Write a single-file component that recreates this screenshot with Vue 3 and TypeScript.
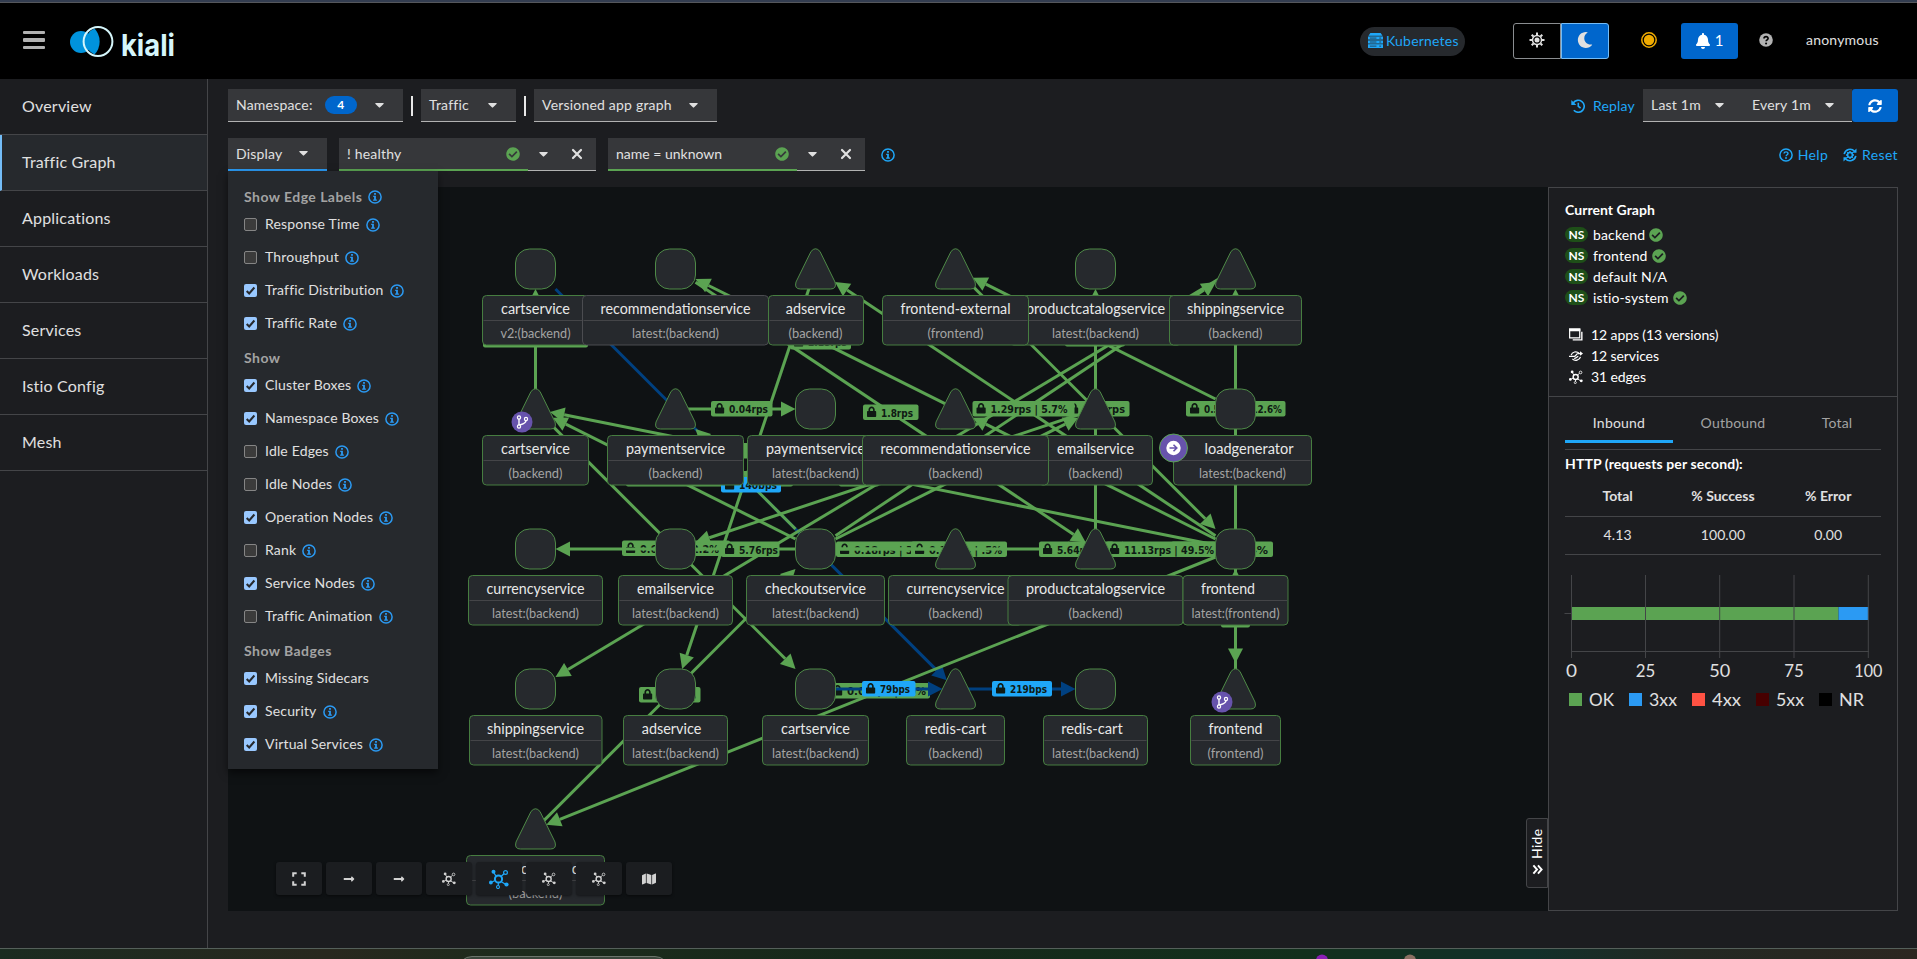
<script setup lang="ts">
import { h, type FunctionalComponent } from 'vue'

type Glyph = { box: string; svg: string }

const glyphs: Record<string, Glyph> = {
  caret: { box: '0 160 320 240', svg: '<path d="M31.3 192h257.3c17.8 0 26.7 21.5 14.1 34.1L174.1 354.8c-7.8 7.8-20.5 7.8-28.3 0L17.2 226.1C4.6 213.5 13.5 192 31.3 192z"/>' },
  check: { box: '0 0 512 512', svg: '<path d="M504 256c0 136.967-111.033 248-248 248S8 392.967 8 256 119.033 8 256 8s248 111.033 248 248zM227.314 387.314l184-184c6.248-6.248 6.248-16.379 0-22.627l-22.627-22.627c-6.248-6.249-16.379-6.249-22.628 0L216 308.118l-70.059-70.059c-6.248-6.248-16.379-6.248-22.628 0l-22.627 22.627c-6.248 6.248-6.248 16.379 0 22.627l104 104c6.249 6.249 16.379 6.249 22.628.001z"/>' },
  close: { box: '0 0 12 12', svg: '<path d="M2 2l8 8M10 2l-8 8" fill="none" stroke="currentColor" stroke-width="2.2" stroke-linecap="round"/>' },
  info: { box: '0 0 14 14', svg: '<circle cx="7" cy="7" r="6.1" fill="none" stroke="currentColor" stroke-width="1.5"/><rect x="6.1" y="3" width="1.8" height="1.8"/><path d="M5.2 5.8h2.7v3.6h1v1.3H5.1V9.4h1V7.1h-.9z"/>' },
  help: { box: '0 0 14 14', svg: '<circle cx="7" cy="7" r="6.1" fill="none" stroke="currentColor" stroke-width="1.5"/><path d="M5 5.5C5.100 3.300 9 3.300 9 5.500C9 6.800 7.200 6.800 7.100 8.200" fill="none" stroke="currentColor" stroke-width="1.4"/><circle cx="7" cy="10" r=".95"/>' },
  helpSolid: { box: '0 0 16 16', svg: '<circle cx="8" cy="8" r="7.800"/><path d="M5.700 6.300C5.800 3.500 10.500 3.500 10.400 6.300C10.300 7.900 8.200 7.800 8.100 9.500" fill="none" stroke="#000" stroke-width="1.900"/><circle cx="8.100" cy="12" r="1.200" fill="#000"/>' },
  moon: { box: '0 0 512 512', svg: '<path d="M283.211 512c78.962 0 151.079-35.925 198.857-94.792 7.068-8.708-.639-21.43-11.562-19.35-124.203 23.654-238.262-71.576-238.262-196.954 0-72.222 38.662-138.635 101.498-174.394 9.686-5.512 7.25-20.197-3.756-22.23A258.156 258.156 0 0 0 283.211 0c-141.309 0-256 114.511-256 256 0 141.309 114.511 256 256 256z"/>' },
  sun: { box: '0 0 16 16', svg: '<g fill="none" stroke="currentColor"><circle cx="8" cy="8" r="4.500" stroke-width="1.500"/><path d="M8 .5v2.500M8 13v2.500M.5 8h2.500M13 8h2.500M2.700 2.700l1.800 1.800M11.500 11.500l1.800 1.800M13.300 2.700l-1.800 1.800M4.500 11.500l-1.800 1.800" stroke-width="2"/></g><circle cx="8" cy="8" r="2.500"/>' },
  status: { box: '0 0 16 16', svg: '<circle cx="8" cy="8" r="7.200" fill="none" stroke="currentColor" stroke-width="1.500"/><circle cx="8" cy="8" r="5.200"/>' },
  bell: { box: '0 0 448 512', svg: '<path d="M224 512c35.32 0 63.97-28.65 63.97-64H160.03c0 35.35 28.65 64 63.97 64zm215.39-149.71c-19.32-20.76-55.47-51.99-55.47-154.29 0-77.7-54.48-139.9-127.94-155.16V32c0-17.67-14.32-32-31.98-32s-31.98 14.33-31.98 32v20.84C118.56 68.1 64.08 130.3 64.08 208c0 102.3-36.15 133.53-55.47 154.29-6 6.45-8.66 14.16-8.61 21.71.11 16.4 12.98 32 32.1 32h383.8c19.12 0 32-15.6 32.1-32 .05-7.55-2.61-15.27-8.61-21.71z"/>' },
  sync: { box: '0 0 512 512', svg: '<path d="M370.72 133.28C339.458 104.008 298.888 87.962 255.848 88c-77.458.068-144.328 53.178-162.791 126.85-1.344 5.363-6.122 9.15-11.651 9.15H24.103c-7.498 0-13.194-6.807-11.807-14.176C33.933 94.924 134.813 8 256 8c66.448 0 126.791 26.136 171.315 68.685L463.03 40.97C478.149 25.851 504 36.559 504 57.941V192c0 13.255-10.745 24-24 24H345.941c-21.382 0-32.09-25.851-16.971-40.971l41.75-41.749zM32 296h134.059c21.382 0 32.09 25.851 16.971 40.971l-41.75 41.75c31.262 29.273 71.835 45.319 114.876 45.28 77.418-.07 144.315-53.144 162.787-126.849 1.344-5.363 6.122-9.15 11.651-9.15h57.304c7.498 0 13.194 6.807 11.807 14.176C478.067 417.076 377.187 504 256 504c-66.448 0-126.791-26.136-171.315-68.685L48.97 471.03C33.851 486.149 8 475.441 8 454.059V320c0-13.255 10.745-24 24-24z"/>' },
  history: { box: '0 0 14 14', svg: '<path d="M2.200 4A6 6 0 1 1 2.800 11.300M7.300 3.800V7.300L9.600 9" fill="none" stroke="currentColor" stroke-width="1.600"/><path d="M.3.900V6h5z"/>' },
  reset: { box: '0 0 14 14', svg: '<g fill="none" stroke="currentColor"><path d="M1.200 6.200A6 6 0 0 1 11.500 3.200M12.800 7.800A6 6 0 0 1 2.500 10.800" stroke-width="1.600"/><circle cx="7" cy="7" r="2.400" stroke-width="1.500"/><path d="M7 3v1.500M7 9.500V11M3 7h1.500M9.500 7H11M4.200 4.200l1 1M8.800 8.800l1 1M9.800 4.200l-1 1M5.200 8.800l-1 1" stroke-width="1.300"/></g><path d="M13.500.5v4.300H9.200zM.5 13.500V9.200h4.300z"/>' },
  server: { box: '0 0 16 16', svg: '<path d="M2.500 0h11l2 3H.5zM0 3.700h16v3.300H0zM0 7.900h16v3.300H0zM0 12.100h16V16H0z"/><path d="M2 5.400h7M2 9.600h7M2 14h7M12 5.400h2M12 9.600h2M12 14h2" stroke="#26292d" stroke-width=".8"/>' },
  arrow: { box: '0 0 448 512', svg: '<path d="M313.941 216H12c-6.627 0-12 5.373-12 12v56c0 6.627 5.373 12 12 12h301.941v46.059c0 21.382 25.851 32.09 40.971 16.971l86.059-86.059c9.373-9.373 9.373-24.569 0-33.941l-86.059-86.059c-15.119-15.119-40.971-4.411-40.971 16.971V216z"/>' },
  expand: { box: '0 0 14 14', svg: '<path d="M1.200 4.700V1.200h3.500M9.300 1.200h3.500v3.500M12.800 9.300v3.500H9.300M4.700 12.800H1.200V9.300" fill="none" stroke="currentColor" stroke-width="2"/>' },
  map: { box: '0 0 576 512', svg: '<path d="M0 117.66v346.32c0 11.32 11.43 19.06 21.94 14.86L160 416V32L20.12 87.95A32.006 32.006 0 0 0 0 117.66zM192 416l192 64V96L192 32v384zM554.06 33.16L416 96v384l139.88-55.95A31.996 31.996 0 0 0 576 394.34V48.02c0-11.32-11.43-19.06-21.94-14.86z"/>' },
  topology: { box: '0 0 20 20', svg: '<g fill="none" stroke="currentColor"><circle cx="9.500" cy="10" r="3.600" stroke-width="2"/><circle cx="16.500" cy="3.500" r="1.900" stroke-width="1.200"/><circle cx="9" cy="18" r="1.500" stroke-width="1.100"/><path d="M12 7.500l3-2.800M7 7.200L5 4M6 11.500l-3 1.500M12 12.500l4 2.500M9.300 13.500v3" stroke-width="1.300"/></g><circle cx="4.500" cy="2.800" r="2"/><circle cx="1.900" cy="13.500" r="1.900"/><circle cx="17.500" cy="15.500" r="2.100"/>' },
  apps: { box: '0 0 15 14', svg: '<path d="M.7.700h10.800v9.300H.7z" fill="none" stroke="currentColor" stroke-width="1.300"/><path d="M0 0h12.200v3H0z"/><path d="M13 3.500h1.500V13H4v-1.500h9z"/>' },
  service: { box: '0 0 15 14', svg: '<g fill="none" stroke="currentColor" stroke-width="1.300"><path d="M2.300 6a5 4.600 0 0 1 8.500-2M12.300 8a5 4.600 0 0 1-8.700 2M0 7.500h5.500c2 0 2-3 4-3H14M5.500 9.500c2.500 0 3-2 4.500-2"/></g><path d="M11.800 2l3.200 2.400-3.200 2.400z"/>' },
  chevrons: { box: '0 0 12 12', svg: '<path d="M1.500 1.500L5.500 6l-4 4.500M6.500 1.500l4 4.500-4 4.500" fill="none" stroke="currentColor" stroke-width="2.100"/>' },
  tick: { box: '0 0 13 13', svg: '<path d="M2.700 7l2.500 2.500 5.200-6" fill="none" stroke="#26292d" stroke-width="2"/>' },
}

const Icon: FunctionalComponent<{ name: string; w: number; hh?: number }> = (p) =>
  h('svg', {
    width: p.w,
    height: p.hh ?? p.w,
    viewBox: glyphs[p.name].box,
    fill: 'currentColor',
    'aria-hidden': 'true',
    innerHTML: glyphs[p.name].svg,
  })
Icon.props = ['name', 'w', 'hh']

const nav = ['Overview', 'Traffic Graph', 'Applications', 'Workloads', 'Services', 'Istio Config', 'Mesh']

type Option = { label: string; on: boolean; info?: boolean }
const menu: { title: string; info?: boolean; items: Option[] }[] = [
  {
    title: 'Show Edge Labels', info: true,
    items: [
      { label: 'Response Time', on: false, info: true },
      { label: 'Throughput', on: false, info: true },
      { label: 'Traffic Distribution', on: true, info: true },
      { label: 'Traffic Rate', on: true, info: true },
    ],
  },
  {
    title: 'Show',
    items: [
      { label: 'Cluster Boxes', on: true, info: true },
      { label: 'Namespace Boxes', on: true, info: true },
      { label: 'Idle Edges', on: false, info: true },
      { label: 'Idle Nodes', on: false, info: true },
      { label: 'Operation Nodes', on: true, info: true },
      { label: 'Rank', on: false, info: true },
      { label: 'Service Nodes', on: true, info: true },
      { label: 'Traffic Animation', on: false, info: true },
    ],
  },
  {
    title: 'Show Badges',
    items: [
      { label: 'Missing Sidecars', on: true },
      { label: 'Security', on: true, info: true },
      { label: 'Virtual Services', on: true, info: true },
    ],
  },
]

/* Graph coordinates are page coordinates; the canvas viewBox starts at 228,187. */
const C = [535.5, 675.5, 815.5, 955.5, 1095.5, 1235.5]
const R = [269, 409, 549, 689, 829]
type Kind = 's' | 't'
type GNode = { c: number; r: number; k: Kind; name: string; tw: number; sub: string; sw: number; x1: number; x2: number; tx?: number; gray?: boolean }
const LB = 'latest:(backend)'
const B = '(backend)'
const nodes: GNode[] = [
  { c: 0, r: 0, k: 's', name: 'cartservice', tw: 69, sub: 'v2:(backend)', sw: 70, x1: 482.5, x2: 588.5 },
  { c: 1, r: 0, k: 's', name: 'recommendationservice', tw: 150, sub: LB, sw: 87, x1: 582.5, x2: 768.5, gray: true },
  { c: 2, r: 0, k: 't', name: 'adservice', tw: 59.5, sub: B, sw: 54, x1: 768.5, x2: 863.5 },
  { c: 4, r: 0, k: 's', name: 'productcatalogservice', tw: 139, sub: LB, sw: 87, x1: 1009.5, x2: 1181.5 },
  { c: 3, r: 0, k: 't', name: 'frontend-external', tw: 110, sub: '(frontend)', sw: 56, x1: 882.5, x2: 1028.5 },
  { c: 5, r: 0, k: 't', name: 'shippingservice', tw: 97, sub: B, sw: 54, x1: 1169.5, x2: 1301.5 },
  { c: 0, r: 1, k: 't', name: 'cartservice', tw: 69, sub: B, sw: 54, x1: 482.5, x2: 588.5 },
  { c: 1, r: 1, k: 't', name: 'paymentservice', tw: 99, sub: B, sw: 54, x1: 607.5, x2: 743.5 },
  { c: 2, r: 1, k: 's', name: 'paymentservice', tw: 99, sub: LB, sw: 87, x1: 747.5, x2: 883.5 },
  { c: 4, r: 1, k: 't', name: 'emailservice', tw: 77, sub: B, sw: 54, x1: 1038.5, x2: 1152.5 },
  { c: 3, r: 1, k: 't', name: 'recommendationservice', tw: 150, sub: B, sw: 54, x1: 862.5, x2: 1048.5 },
  { c: 5, r: 1, k: 's', name: 'loadgenerator', tw: 89, sub: LB, sw: 87, x1: 1173.5, x2: 1311.5, tx: 1249 },
  { c: 0, r: 2, k: 's', name: 'currencyservice', tw: 98, sub: LB, sw: 87, x1: 468.5, x2: 602.5 },
  { c: 1, r: 2, k: 's', name: 'emailservice', tw: 77, sub: LB, sw: 87, x1: 618.5, x2: 732.5 },
  { c: 2, r: 2, k: 's', name: 'checkoutservice', tw: 101, sub: LB, sw: 87, x1: 746.5, x2: 884.5 },
  { c: 3, r: 2, k: 't', name: 'currencyservice', tw: 98, sub: B, sw: 54, x1: 888.5, x2: 1022.5 },
  { c: 4, r: 2, k: 't', name: 'productcatalogservice', tw: 139, sub: B, sw: 54, x1: 1008, x2: 1183 },
  { c: 5, r: 2, k: 's', name: 'frontend', tw: 54, sub: 'latest:(frontend)', sw: 88, x1: 1183, x2: 1288, tx: 1228 },
  { c: 0, r: 3, k: 's', name: 'shippingservice', tw: 97, sub: LB, sw: 87, x1: 469.5, x2: 602 },
  { c: 1, r: 3, k: 's', name: 'adservice', tw: 59.5, sub: LB, sw: 87, x1: 623.5, x2: 727.5, tx: 671.5 },
  { c: 2, r: 3, k: 's', name: 'cartservice', tw: 69, sub: LB, sw: 87, x1: 762.5, x2: 868.5 },
  { c: 3, r: 3, k: 't', name: 'redis-cart', tw: 61.5, sub: B, sw: 54, x1: 906.5, x2: 1004.5 },
  { c: 4, r: 3, k: 's', name: 'redis-cart', tw: 61.5, sub: LB, sw: 87, x1: 1043.5, x2: 1147.5, tx: 1092 },
  { c: 5, r: 3, k: 't', name: 'frontend', tw: 54, sub: '(frontend)', sw: 56, x1: 1190.5, x2: 1280.5 },
  { c: 0, r: 4, k: 't', name: 'checkoutservice', tw: 101, sub: B, sw: 54, x1: 466.5, x2: 604.5 },
]

const kindAt = (c: number, r: number): Kind => nodes.find((n) => n.c === c && n.r === r)!.k
function reach(k: Kind, dx: number, dy: number): number {
  if (k === 's') return 20 / Math.max(Math.abs(dx), Math.abs(dy))
  const side = Math.abs(dx) - dy / 2
  const hits: number[] = []
  if (side > 0.01) hits.push(13 / side)
  if (dy > 0.01) hits.push(20 / dy)
  return hits.length ? Math.min(...hits) : 20
}

/* [from column, from row, to column, to row, tcp] */
const links: [number, number, number, number, boolean?][] = [
  [0, 0, 3, 3, true], [2, 3, 3, 3, true], [3, 3, 4, 3, true],
  [0, 1, 0, 0], [0, 1, 2, 3], [2, 2, 0, 1], [5, 2, 0, 1], [1, 1, 2, 1], [2, 2, 1, 1],
  [3, 1, 1, 0], [1, 0, 4, 2], [5, 2, 2, 0], [2, 0, 1, 3], [5, 2, 3, 1], [5, 1, 3, 0],
  [3, 0, 5, 2], [4, 2, 4, 0], [5, 2, 5, 0], [2, 2, 5, 0], [5, 0, 0, 3], [2, 2, 4, 1],
  [4, 1, 1, 2], [3, 2, 0, 2], [2, 2, 4, 2], [5, 2, 4, 2], [0, 4, 2, 2], [5, 2, 0, 4],
  [5, 2, 5, 3], [5, 3, 5, 2],
]
const edges = links.map(([ac, ar, bc, br, tcp]) => {
  const dx = C[bc] - C[ac]
  const dy = R[br] - R[ar]
  const l = Math.hypot(dx, dy)
  const ux = dx / l
  const uy = dy / l
  const s = kindAt(ac, ar) === 's' ? reach('s', ux, uy) : 4
  const e = reach(kindAt(bc, br), -ux, -uy)
  const x2 = C[bc] - ux * e
  const y2 = R[br] - uy * e
  const bx = x2 - ux * 14.5
  const by = y2 - uy * 14.5
  return {
    x1: C[ac] + ux * s, y1: R[ar] + uy * s, x2: bx, y2: by, tcp: !!tcp,
    tip: `${x2},${y2} ${bx - uy * 7.5},${by + ux * 7.5} ${bx + uy * 7.5},${by - ux * 7.5}`,
  }
})

type Pill = { x: number; y: number; w: number; t?: string; tw?: number; tcp?: boolean; struck?: boolean; bare?: boolean }
const pills: Pill[] = [
  { x: 483, y: 332, w: 105, bare: true },
  { x: 790, y: 334, w: 61, t: '2.15rps', tw: 39 },
  { x: 1065, y: 331, w: 60, bare: true },
  { x: 626, y: 471, w: 167, bare: true },
  { x: 728, y: 443, w: 40, bare: true },
  { x: 839, y: 471, w: 40, bare: true },
  { x: 721, y: 477, w: 60, t: '140bps', tw: 38, tcp: true },
  { x: 711, y: 401, w: 61.5, t: '0.04rps', tw: 39 },
  { x: 863, y: 404.5, w: 55.5, t: '1.8rps', tw: 32 },
  { x: 1065, y: 401, w: 64.5, t: '1.02rps', tw: 42 },
  { x: 972.5, y: 401, w: 102, t: '1.29rps | 5.7%', tw: 77 },
  { x: 1186, y: 401, w: 99.5, t: '0.52rps | 12.6%', tw: 78 },
  { x: 622, y: 540.5, w: 108, t: '0.60rps | 2.2%', tw: 79, struck: true },
  { x: 721, y: 541.5, w: 58.5, t: '5.76rps', tw: 39 },
  { x: 836, y: 541.5, w: 110, t: '0.18rps | 3.2%', tw: 79, struck: true },
  { x: 911, y: 541.5, w: 96, t: '0.12rps | .5%', tw: 73, struck: true },
  { x: 1171, y: 541.5, w: 102, t: '1.04rps | 4%', tw: 79 },
  { x: 1039, y: 541.5, w: 75, t: '5.64rps', tw: 39 },
  { x: 1106, y: 541.5, w: 110, t: '11.13rps | 49.5%', tw: 90 },
  { x: 1221, y: 612, w: 29, bare: true },
  { x: 639, y: 687, w: 61.5, t: '0.09rps', tw: 39 },
  { x: 829, y: 683, w: 101, t: '0.04rps | 10%', tw: 79, struck: true },
  { x: 862, y: 681, w: 53.5, t: '79bps', tw: 30, tcp: true },
  { x: 992, y: 681, w: 60, t: '219bps', tw: 37, tcp: true },
]
const under = pills.filter((p) => p.struck || p.bare)
const over = pills.filter((p) => !p.struck && !p.bare)
const LOCK = 'M400 224h-24v-72C376 68.2 307.800 0 224 0S72 68.200 72 152v72H48c-26.500 0-48 21.500-48 48v192c0 26.500 21.500 48 48 48h352c26.500 0 48-21.500 48-48V272c0-26.500-21.500-48-48-48zm-104 0H152v-72c0-39.700 32.300-72 72-72s72 32.300 72 72v72z'

const tools = ['expand', 'arrow', 'arrow', 'topology', 'topology', 'topology', 'topology', 'map']
const namespaces = [
  { name: 'backend', ok: true }, { name: 'frontend', ok: true }, { name: 'default N/A', ok: false }, { name: 'istio-system', ok: true },
]
const totals = [
  { icon: 'apps', text: '12 apps (13 versions)' }, { icon: 'service', text: '12 services' }, { icon: 'topology', text: '31 edges' },
]
const ticks = [
  { v: '0', x: 1571.5, w: 11 }, { v: '25', x: 1645.5, w: 19.5 }, { v: '50', x: 1719.7, w: 21 }, { v: '75', x: 1794, w: 19.5 }, { v: '100', x: 1868.3, w: 28 },
]
const legend = [
  { t: 'OK', x: 1569, c: '#5ba352', w: 25 }, { t: '3xx', x: 1629, c: '#2b9af3', w: 28 }, { t: '4xx', x: 1692, c: '#ff5243', w: 29 },
  { t: '5xx', x: 1756, c: '#470000', w: 28 }, { t: 'NR', x: 1819, c: '#000', w: 25 },
]
</script>

<template>
  <div class="screen">
    <div class="strip"></div>
    <header class="masthead">
      <div class="burger"><i></i><i></i><i></i></div>
      <svg class="logo" width="110" height="36" viewBox="68 23 110 36">
        <circle cx="81" cy="42" r="11" fill="#0093dd" />
        <path d="M94.500 28.500a14 14 0 0 0 0 26a19 19 0 0 0 0-26z" fill="#0093dd" />
        <circle cx="98" cy="41.500" r="14.400" fill="none" stroke="#d5f6fb" stroke-width="2" />
        <text x="121" y="55.500" font-size="30" textLength="54" lengthAdjust="spacingAndGlyphs" fill="#d5f6fb">kiali</text>
      </svg>
      <span class="cluster"><Icon name="server" :w="15" :hh="15" /><span>Kubernetes</span></span>
      <div class="theme">
        <span><Icon name="sun" :w="16" /></span>
        <span class="on"><Icon name="moon" :w="16" /></span>
      </div>
      <Icon class="status" name="status" :w="16" />
      <span class="bell"><Icon name="bell" :w="14" :hh="16" /><span>1</span></span>
      <Icon class="question" name="helpSolid" :w="14" />
      <span class="user">anonymous</span>
    </header>

    <div class="body">
      <nav class="side">
        <a v-for="(n, i) in nav" :key="n" :class="{ active: i === 1 }">{{ n }}</a>
      </nav>

      <main class="page">
        <div class="row">
          <div class="select ns"><span>Namespace:</span><b>4</b><Icon name="caret" :w="9" :hh="7" /></div>
          <i class="bar"></i>
          <div class="select traffic"><span>Traffic</span><Icon name="caret" :w="9" :hh="7" /></div>
          <i class="bar"></i>
          <div class="select versioned"><span>Versioned app graph</span><Icon name="caret" :w="9" :hh="7" /></div>
          <a class="link replay"><Icon name="history" :w="14" /><span>Replay</span></a>
          <div class="times">
            <span class="t1">Last 1m</span><Icon name="caret" :w="9" :hh="7" />
            <span class="t2">Every 1m</span><Icon name="caret" :w="9" :hh="7" />
          </div>
          <span class="refresh"><Icon name="sync" :w="14" /></span>
        </div>

        <div class="row second">
          <div class="display">
            <div class="select open"><span>Display</span><Icon name="caret" :w="9" :hh="7" /></div>
            <div class="menu">
              <section v-for="g in menu" :key="g.title">
                <h4><span>{{ g.title }}</span><Icon v-if="g.info" name="info" :w="14" /></h4>
                <label v-for="o in g.items" :key="o.label">
                  <span class="box" :class="{ on: o.on }"><Icon v-if="o.on" name="tick" :w="13" /></span>
                  <span class="text">{{ o.label }}</span><Icon v-if="o.info" name="info" :w="14" />
                </label>
              </section>
            </div>
          </div>
          <div class="filter">
            <div class="value"><span>! healthy</span><Icon class="ok" name="check" :w="14" /></div>
            <span class="drop"><Icon name="caret" :w="9" :hh="7" /></span>
            <span class="clear"><Icon name="close" :w="12" /></span>
          </div>
          <div class="filter">
            <div class="value"><span class="unknown">name = unknown</span><Icon class="ok" name="check" :w="14" /></div>
            <span class="drop"><Icon name="caret" :w="9" :hh="7" /></span>
            <span class="clear"><Icon name="close" :w="12" /></span>
          </div>
          <Icon class="blue" name="info" :w="14" />
          <a class="link help"><Icon name="help" :w="14" /><span>Help</span></a>
          <a class="link"><Icon name="reset" :w="14" /><span>Reset</span></a>
        </div>

        <div class="work">
          <div class="canvas">
            <svg class="graph" width="1320" height="724" viewBox="228 187 1320 724">
              <defs>
                <g id="lock"><path :d="LOCK" transform="scale(.0205)" /></g>
              </defs>
              <g v-for="(p, i) in under" :key="'u' + i" :class="['pill', { tcp: p.tcp }]">
                <rect :x="p.x" :y="p.y" :width="p.w" height="15.500" rx="2" />
                <template v-if="p.t">
                  <use href="#lock" :x="p.x + 4" :y="p.y + 2" />
                  <text :x="p.x + 18" :y="p.y + 12" :textLength="p.tw" lengthAdjust="spacingAndGlyphs">{{ p.t }}</text>
                </template>
              </g>
              <g v-for="(e, i) in edges" :key="'e' + i" :class="['edge', { tcp: e.tcp }]">
                <line :x1="e.x1" :y1="e.y1" :x2="e.x2" :y2="e.y2" />
                <polygon :points="e.tip" />
              </g>
              <g v-for="(p, i) in over" :key="'p' + i" :class="['pill', { tcp: p.tcp }]">
                <rect :x="p.x" :y="p.y" :width="p.w" height="15.500" rx="2" />
                <use href="#lock" :x="p.x + 4" :y="p.y + 2" />
                <text :x="p.x + 18" :y="p.y + 12" :textLength="p.tw" lengthAdjust="spacingAndGlyphs">{{ p.t }}</text>
              </g>
              <g v-for="(n, i) in nodes" :key="'n' + i" class="node">
                <g :transform="`translate(${C[n.c]} ${R[n.r]})`">
                  <rect v-if="n.k === 's'" x="-20" y="-20" width="40" height="40" rx="14" />
                  <path v-else d="M-4.500-17.500Q0-23 4.500-17.500L19.500 13Q21.500 20 15 20H-15Q-21.500 20-19.500 13Z" />
                </g>
              </g>
              <g v-for="(n, i) in nodes" :key="'l' + i" class="caption" :class="{ gray: n.gray }">
                <rect :x="n.x1" :y="R[n.r] + 26.5" :width="n.x2 - n.x1" height="49.500" rx="4" />
                <line :x1="n.x1 + 1" :x2="n.x2 - 1" :y1="R[n.r] + 51.500" :y2="R[n.r] + 51.500" />
                <text class="name" :x="(n.tx ?? C[n.c]) - n.tw / 2" :y="R[n.r] + 44.5" :textLength="n.tw" lengthAdjust="spacingAndGlyphs">{{ n.name }}</text>
                <text class="sub" :x="(n.c === 5 && n.r === 1 ? 1242.500 : C[n.c]) - n.sw / 2" :y="R[n.r] + 68.5" :textLength="n.sw" lengthAdjust="spacingAndGlyphs">{{ n.sub }}</text>
              </g>
              <g v-for="b in [[522, 422], [1222, 702]]" :key="b[0]" class="badge" :transform="`translate(${b[0]} ${b[1]})`">
                <circle r="10.500" />
                <path d="M-3-4v8.500M4-1.500c0 3-3 3.500-6.500 4.500" />
                <circle class="dot" cx="-3" cy="-4.500" r="1.600" /><circle class="dot" cx="-3" cy="4.500" r="1.600" /><circle class="dot" cx="4" cy="-3" r="1.600" />
              </g>
              <g class="entry" transform="translate(1173.500 448)">
                <circle r="14" />
                <circle class="disc" r="7.200" />
                <path d="M-4 0H3M0-3.300L3.300 0 0 3.300" />
              </g>
            </svg>
            <div class="tools">
              <span v-for="(t, i) in tools" :key="i" :class="{ active: i === 4 }">
                <Icon :name="t" :w="i === 4 ? 20 : t === 'arrow' ? 12 : 14" />
              </span>
            </div>
            <div class="hide"><span>Hide</span><Icon name="chevrons" :w="11" /></div>
          </div>

          <aside class="panel">
            <div class="summary">
              <h3>Current Graph</h3>
              <div v-for="n in namespaces" :key="n.name" class="nsline">
                <b>NS</b><span>{{ n.name }}</span><Icon v-if="n.ok" class="ok" name="check" :w="14" />
              </div>
              <div class="totals">
                <div v-for="t in totals" :key="t.text"><Icon :name="t.icon" :w="14" /><span>{{ t.text }}</span></div>
              </div>
            </div>
            <div class="tabs"><span class="on">Inbound</span><span>Outbound</span><span>Total</span></div>
            <h3 class="http">HTTP (requests per second):</h3>
            <div class="table head"><span>Total</span><span>% Success</span><span>% Error</span></div>
            <div class="table"><span>4.13</span><span>100.00</span><span>0.00</span></div>
            <svg class="chart" width="332" height="160" viewBox="1557 565 332 160">
              <rect x="1571.500" y="607" width="267" height="13" fill="#5ba352" />
              <rect x="1838.500" y="607" width="30" height="13" fill="#2b9af3" />
              <path class="axis" d="M1564.500 613.500h7M1571 651.500h298" />
              <g v-for="t in ticks" :key="t.v">
                <path class="axis" :d="`M${t.x} 575v83`" />
                <text :x="t.x - t.w / 2" y="677" :textLength="t.w" lengthAdjust="spacingAndGlyphs">{{ t.v }}</text>
              </g>
              <g v-for="l in legend" :key="l.t">
                <rect :x="l.x" y="693" width="13" height="13" :fill="l.c" />
                <text :x="l.x + 20" y="706" :textLength="l.w" lengthAdjust="spacingAndGlyphs">{{ l.t }}</text>
              </g>
            </svg>
          </aside>
        </div>
      </main>
    </div>

    <footer class="desk">
      <svg width="1917" height="11" viewBox="0 0 1917 11">
        <rect x="458" y="8.500" width="211" height="30" rx="14" fill="#3a463b" stroke="#6c756c" />
        <circle cx="1322" cy="12.500" r="6" fill="#8a1fb5" />
        <circle cx="1410" cy="12.500" r="6" fill="#8b6f62" />
      </svg>
    </footer>
  </div>
</template>

<style>
html, body { background: #1c1d20; overflow: hidden; }
</style>

<style scoped>
.screen { width: 1917px; height: 959px; display: flex; flex-direction: column; overflow: hidden; background: #1c1d20; color: #e0e0e0; font: 14px/21px Lato, "Open Sans", sans-serif; }
.screen * { box-sizing: border-box; }
svg { flex: none; display: block; }
.strip { height: 3px; background: #333d50; border-bottom: 1px solid #55575c; }
.masthead { height: 76px; background: #000; display: flex; align-items: center; flex: none; }
.burger { width: 22px; margin: 0 0 2px 23px; display: flex; flex-direction: column; gap: 4px; }
.burger i { height: 3.500px; background: #b2b2b2; border-radius: 1px; }
.logo { margin-left: 23px; overflow: visible; }
.logo text { font-family: Inter, sans-serif; font-weight: 700; }
.cluster { margin-left: 1182px; width: 105px; height: 29px; border-radius: 15px; background: #26292d; color: #1fa7f8; display: flex; align-items: center; gap: 3px; padding: 0 0 1px 8px; letter-spacing: .2px; }
.theme { margin-left: 48px; display: flex; }
.theme span { width: 48px; height: 36px; border: 1px solid #8a8d90; border-radius: 3px 0 0 3px; display: grid; place-items: center; padding-bottom: 2px; }
.theme .on { background: #06c; border-color: #73bcf7; border-radius: 0 3px 3px 0; }
.status { color: #f0ab00; margin: 0 0 2px 32px; }
.bell { margin-left: 24px; width: 57px; height: 36px; border-radius: 3px; background: #06c; color: #fff; display: flex; align-items: center; justify-content: center; gap: 5px; font-size: 15px; padding-bottom: 1px; }
.question { color: #b2b2b2; margin: 0 0 2px 21px; }
.user { margin: 0 0 3px 33px; letter-spacing: .2px; }
.body { display: flex; height: 869px; flex: none; }
.side { width: 208px; border-right: 1px solid #444548; display: flex; flex-direction: column; }
.side a { height: 56px; padding: 0 0 3px 22px; border-bottom: 1px solid #444548; display: flex; align-items: center; font-size: 16px; letter-spacing: .2px; flex: none; }
.side a.active { background: #26292d; border-left: 2px solid #73bcf7; padding-left: 20px; }
.page { flex: 1; padding: 10px 19px 0 20px; }
.row { display: flex; align-items: center; height: 33px; }
.second { margin-top: 16px; }
.select { height: 33px; background: #36373a; border-bottom: 1px solid #b2b2b2; display: flex; align-items: center; justify-content: space-between; padding: 0 19px 0 8px; }
.select span, .times span, .value span { letter-spacing: .2px; padding-bottom: 1px; }
.value .unknown { letter-spacing: 0; }
.ns { width: 175px; }
.ns b { width: 32px; height: 18px; border-radius: 9px; background: #06c; color: #fff; font-size: 12px; line-height: 18px; text-align: center; margin-left: -6px; }
.bar { width: 2px; height: 20px; background: #e8e8e8; margin: 0 8px; }
.traffic { width: 95px; }
.versioned { width: 183px; }
.link { color: #1fa7f8; display: flex; align-items: center; gap: 6px; letter-spacing: .2px; }
.link span { padding-bottom: 1px; }
.replay { margin-left: auto; margin-right: 8px; gap: 8px; }
.times { width: 209px; height: 33px; background: #36373a; border-bottom: 1px solid #b2b2b2; display: flex; align-items: center; padding-left: 8px; }
.t1 { width: 64px; }
.t2 { width: 73px; margin-left: 28px; }
.refresh { width: 46px; height: 33px; background: #06c; border-radius: 3px; color: #fff; display: grid; place-items: center; }
.display { position: relative; width: 99px; margin-right: 12px; }
.open { border-bottom: 2px solid #2b9af3; }
.filter { display: flex; width: 257px; height: 33px; margin-right: 12px; background: #36373a; }
.value { width: 189px; border-bottom: 2px solid #5ba352; display: flex; align-items: center; justify-content: space-between; padding: 0 8px; }
.ok { color: #5ba352; }
.drop, .clear { width: 30px; border-bottom: 1px solid #b2b2b2; display: grid; place-items: center; }
.clear { width: 38px; }
.blue { color: #1fa7f8; margin-left: 4px; }
.help { margin-left: auto; margin-right: 15px; }
.help, .help + .link { gap: 5px; letter-spacing: .35px; }
.menu { position: absolute; z-index: 5; top: 33px; left: 0; width: 210px; height: 598px; background: #26292d; box-shadow: 0 4px 8px rgba(0, 0, 0, .55); padding: 15px 16px 0; }
.menu h4 { margin: 0; height: 22px; font-size: 14px; font-weight: 700; color: #a3a3a3; display: flex; align-items: center; gap: 6px; letter-spacing: .45px; }
.menu h4 span, .menu .text { padding-bottom: 2px; }
.menu section { margin-bottom: 7px; }
.menu h4 svg, .menu label > svg { color: #2b9af3; }
.menu label { height: 33px; display: flex; align-items: center; letter-spacing: .17px; white-space: nowrap; }
.menu label > svg { margin-left: 6px; }
.box { width: 13px; height: 13px; border: 1px solid #858585; border-radius: 2px; background: #3b3b3b; margin-right: 8px; flex: none; }
.box.on { background: #99c8ff; border: 0; }
.work { margin-top: 16px; display: flex; height: 724px; }
.canvas { width: 1320px; position: relative; background: #0f1214; }
.edge line { stroke: #5ba352; stroke-width: 3; }
.edge polygon { fill: #5ba352; }
.edge.tcp line { stroke: #004080; }
.edge.tcp polygon { fill: #004080; }
.pill rect { fill: #5ba352; }
.pill.tcp rect { fill: #1fa7f8; }
.pill { fill: #0f1a14; }
.pill text { font: bold 10.500px "DejaVu Sans", sans-serif; }
.node rect, .node path { fill: #26292d; stroke: #4e8a47; stroke-width: 1; }
.caption rect { fill: #26292d; stroke: #467d40; }
.caption.gray rect { stroke: #4b4c50; }
.caption line { stroke: #444548; }
.name { font-size: 14.500px; fill: #e8e8e8; }
.sub { font-size: 12.500px; fill: #a3a3a3; }
.badge circle, .entry circle { fill: #6753ac; }
.badge path { fill: none; stroke: #fff; stroke-width: 1.400; }
.badge .dot { stroke: #fff; stroke-width: 1.200; }
.entry circle { stroke: #5ba352; }
.entry .disc { fill: #fff; stroke: none; }
.entry path { fill: none; stroke: #6753ac; stroke-width: 1.600; }
.tools { position: absolute; left: 48px; top: 675px; display: flex; gap: 4px; color: #d2d2d2; }
.tools span { width: 46px; height: 33px; background: #1b1d20; border-radius: 3px; display: grid; place-items: center; box-shadow: 0 1px 3px rgba(0, 0, 0, .5); }
.tools .active { color: #1fa7f8; }
.hide { position: absolute; right: 0; top: 631px; width: 22px; height: 70px; border: 1px solid #444548; border-radius: 3px 0 0 3px; background: #1c1d20; display: flex; flex-direction: column; align-items: center; gap: 5px; padding-top: 11px; color: #fff; }
.hide span { writing-mode: vertical-rl; transform: rotate(180deg); line-height: 16px; height: 29px; letter-spacing: .3px; }
.panel { width: 350px; border: 1px solid #444548; color: #fff; }
.summary { height: 209px; border-bottom: 1px solid #444548; padding: 11px 16px 0; }
h3 { margin: 0; font-size: 14px; line-height: 21px; font-weight: 700; letter-spacing: .05px; }
.summary h3 { margin-bottom: 4px; }
.nsline { display: flex; height: 21px; align-items: center; letter-spacing: .15px; }
.nsline b { width: 23px; height: 15px; border-radius: 8px; background: #1e4f18; font-size: 12px; line-height: 15px; text-align: center; margin-right: 5px; letter-spacing: 0; }
.nsline svg { margin-left: 4px; }
.totals { margin-top: 16px; }
.totals div { display: flex; align-items: center; height: 21px; padding-left: 4px; gap: 8px; letter-spacing: -.1px; }
.tabs { margin: 0 16px; height: 53px; border-bottom: 1px solid #444548; display: flex; color: #a3a3a3; letter-spacing: .2px; }
.tabs span { height: 46px; line-height: 52px; text-align: center; width: 120px; }
.tabs .on { width: 108px; color: #e0e0e0; border-bottom: 3px solid #1fa7f8; }
.tabs span:last-child { width: 88px; }
.http { margin: 3px 16px 0; letter-spacing: .1px; }
.table { margin: 0 16px; height: 38px; border-bottom: 1px solid #444548; display: grid; grid-template-columns: repeat(3, 105.300px); text-align: center; line-height: 36px; color: #e0e0e0; letter-spacing: .1px; }
.table.head { height: 43px; line-height: 44px; font-weight: 700; letter-spacing: 0; }
.chart { margin: 10px 0 0 8px; }
.chart text { font-size: 18px; fill: #e0e0e0; }
.axis { fill: none; stroke: #444548; stroke-width: 1; }
.desk { height: 11px; flex: none; border-top: 1px solid #55605a; background: linear-gradient(90deg, #1a2b20, #28281e 17%, #1c2b1c 27%, #16281a 45%, #12301c 68%, #12302a 80%, #222822 88%, #2c2620); }
.desk svg { margin-top: -1px; }
</style>
